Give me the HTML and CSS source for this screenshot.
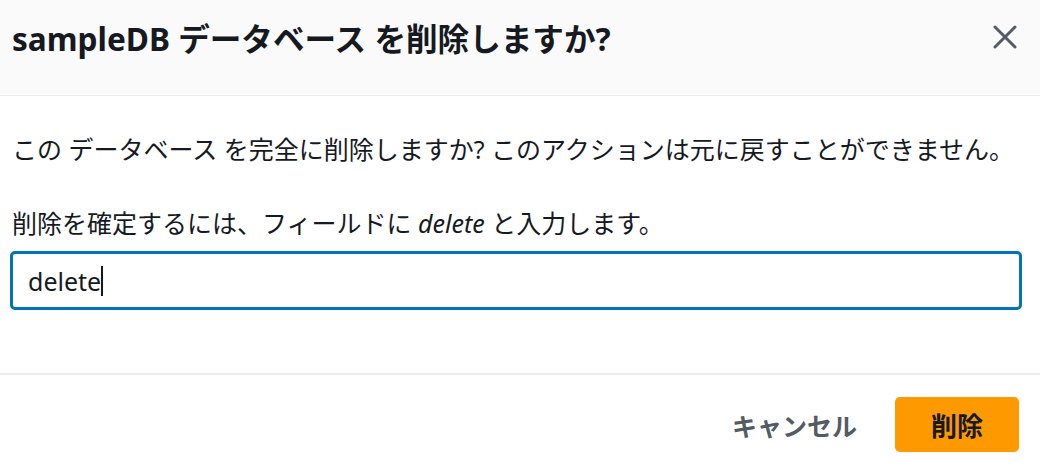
FILE: index.html
```html
<!DOCTYPE html>
<html lang="ja">
<head>
<meta charset="utf-8">
<link rel="stylesheet" href="styles.css">
</head>
<body>
<div class="modal">
  <header class="modal-header">
    <h1 class="title">sampleDB データベース を削除しますか?</h1>
    <button class="close" aria-label="閉じる">
      <svg width="24" height="24" viewBox="0 0 24 24"><path d="M2 2 L22 22 M22 2 L2 22" stroke="#545b64" stroke-width="3" stroke-linecap="round" fill="none"/></svg>
    </button>
  </header>
  <section class="modal-body">
    <p class="message">この データベース を完全に削除しますか? このアクションは元に戻すことができません。</p>
    <label class="label">削除を確定するには、フィールドに <em>delete</em> と入力します。</label>
    <div class="input"><span class="value">delete</span><span class="caret"></span></div>
  </section>
  <footer class="modal-footer">
    <button class="btn-link">キャンセル</button>
    <button class="btn-primary">削除</button>
  </footer>
</div>
</body>
</html>
```

FILE: styles.css
```css
html, body {
  margin: 0;
  padding: 0;
  background: #ffffff;
}
body {
  font-family: "Noto Sans", "Noto Sans CJK JP", sans-serif;
  color: #16191f;
  width: 1040px;
  height: 472px;
  overflow: hidden;
}
.modal {
  display: flex;
  flex-direction: column;
}
.modal-header {
  height: 95px;
  background: #fafafa;
  border-bottom: 1px solid #eaeded;
  display: flex;
  align-items: flex-start;
  justify-content: space-between;
  padding: 0 23px 0 12px;
}
.title {
  margin: 0;
  padding-top: 19px;
  font-size: 31.6px;
  line-height: 40px;
  font-weight: 700;
}
.close {
  margin-top: 25px;
  background: none;
  border: none;
  padding: 0;
  width: 24px;
  height: 24px;
  display: flex;
}
.modal-body {
  height: 277px;
  border-bottom: 2px solid #eaeded;
  padding: 0 18px 0 10px;
  display: flex;
  flex-direction: column;
}
.message {
  margin: 35px 0 0 2px;
  font-size: 25px;
  line-height: 36px;
}
.label {
  margin: 38px 0 0 2px;
  font-size: 25px;
  line-height: 36px;
}
.label em {
  font-style: italic;
}
.input {
  margin-top: 10px;
  height: 53px;
  border: 3px solid #0073bb;
  border-radius: 5px;
  display: flex;
  align-items: center;
  padding-left: 15px;
  font-size: 25px;
}
.caret {
  display: inline-block;
  width: 2px;
  height: 30px;
  background: #16191f;
}
.modal-footer {
  display: flex;
  justify-content: flex-end;
  align-items: center;
  gap: 38px;
  padding: 22px 21px 0 0;
}
.btn-link {
  background: none;
  border: none;
  font-family: inherit;
  font-size: 25px;
  font-weight: 700;
  color: #545b64;
  padding: 0;
}
.btn-primary {
  width: 124px;
  height: 55px;
  background: #ff9900;
  border: none;
  border-radius: 5px;
  font-family: inherit;
  font-size: 26px;
  font-weight: 700;
  color: #16191f;
}
```
